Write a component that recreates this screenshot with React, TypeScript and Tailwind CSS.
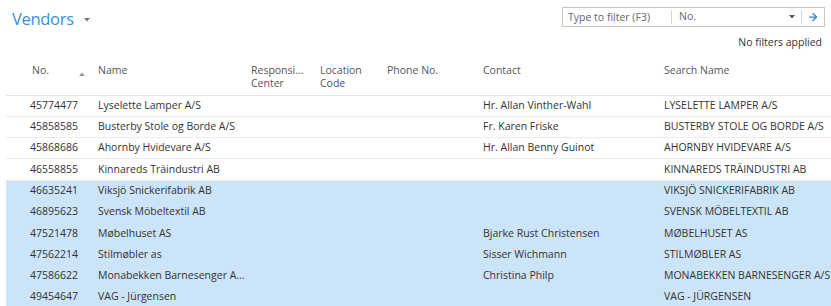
import { ArrowRight } from "lucide-react"

const rows = [
  { no: "45774477", name: "Lyselette Lamper A/S", contact: "Hr. Allan Vinther-Wahl", search: "LYSELETTE LAMPER A/S" },
  { no: "45858585", name: "Busterby Stole og Borde A/S", contact: "Fr. Karen Friske", search: "BUSTERBY STOLE OG BORDE A/S" },
  { no: "45868686", name: "Ahornby Hvidevare A/S", contact: "Hr. Allan Benny Guinot", search: "AHORNBY HVIDEVARE A/S" },
  { no: "46558855", name: "Kinnareds Träindustri AB", contact: "", search: "KINNAREDS TRÄINDUSTRI AB" },
  { no: "46635241", name: "Viksjö Snickerifabrik AB", contact: "", search: "VIKSJÖ SNICKERIFABRIK AB", sel: true },
  { no: "46895623", name: "Svensk Möbeltextil AB", contact: "", search: "SVENSK MÖBELTEXTIL AB", sel: true },
  { no: "47521478", name: "Møbelhuset AS", contact: "Bjarke Rust Christensen", search: "MØBELHUSET AS", sel: true },
  { no: "47562214", name: "Stilmøbler as", contact: "Sisser Wichmann", search: "STILMØBLER AS", sel: true },
  { no: "47586622", name: "Monabekken Barnesenger A...", contact: "Christina Philp", search: "MONABEKKEN BARNESENGER A/S", sel: true },
  { no: "49454647", name: "VAG - Jürgensen", contact: "", search: "VAG - JÜRGENSEN", sel: true },
]

function Caret({ className }: { className?: string }) {
  return (
    <svg width="6" height="4" viewBox="0 0 6 4" className={className}>
      <path d="M0 0 L6 0 L3 3.5 Z" fill="currentColor" />
    </svg>
  )
}

export default function App() {
  return (
    <div
      className="w-[831px] h-[306px] overflow-hidden bg-white text-[11px] text-[#333]"
      style={{ fontFamily: '"Open Sans", "Noto Sans", sans-serif' }}
    >
      <div className="flex items-start justify-between pl-3 pr-[6px] pt-[7px]">
        <div className="flex items-center gap-[10px] pt-[1px]">
          <span className="text-[16.5px] leading-[22px] text-[#3b8fd9] tracking-[-0.3px]">Vendors</span>
          <Caret className="text-[#777] mt-[2px]" />
        </div>
        <div className="flex flex-col items-end">
          <div className="flex items-center w-[263px] h-[20px] border border-[#c4c4c4] text-[10.5px] text-[#666]">
            <span className="w-[109px] pl-[5px] border-r border-[#d4d4d4] leading-[14px]">Type to filter (F3)</span>
            <span className="flex-1 pl-[7px]">No.</span>
            <Caret className="text-[#555] mr-[6px]" />
            <div className="w-px h-[14px] bg-[#d4d4d4]" />
            <ArrowRight className="w-[12px] h-[12px] mx-[5px] text-[#2e83d4]" strokeWidth={2.5} />
          </div>
          <div className="mt-[8px] pr-[3px] text-[10.5px] text-[#333]">No filters applied</div>
        </div>
      </div>

      <div className="flex h-[38px] mt-[7px] ml-[6px] pt-[6px] border-b border-[#e4e4e4] text-[10.5px] text-[#555] leading-[13px]">
        <div className="w-[92px] pl-[26px] flex">
          <span>No.</span>
          <Caret className="text-[#999] ml-[30px] mt-[8px] rotate-180" />
        </div>
        <div className="w-[153px]">Name</div>
        <div className="w-[69px]">Responsi...<br />Center</div>
        <div className="w-[67px]">Location<br />Code</div>
        <div className="w-[96px]">Phone No.</div>
        <div className="w-[181px]">Contact</div>
        <div>Search Name</div>
      </div>

      <div className="ml-[6px]">
        {rows.map((r) => (
          <div
            key={r.no}
            className={`flex items-center h-[21.2px] text-[10.5px] ${
              r.sel ? "bg-[#cce4f7]" : "border-b border-[#ececec]"
            }`}
          >
            <div className="w-[92px] pl-[24px]">{r.no}</div>
            <div className="w-[385px]">{r.name}</div>
            <div className="w-[181px]">{r.contact}</div>
            <div className="whitespace-nowrap">{r.search}</div>
          </div>
        ))}
      </div>
    </div>
  )
}
